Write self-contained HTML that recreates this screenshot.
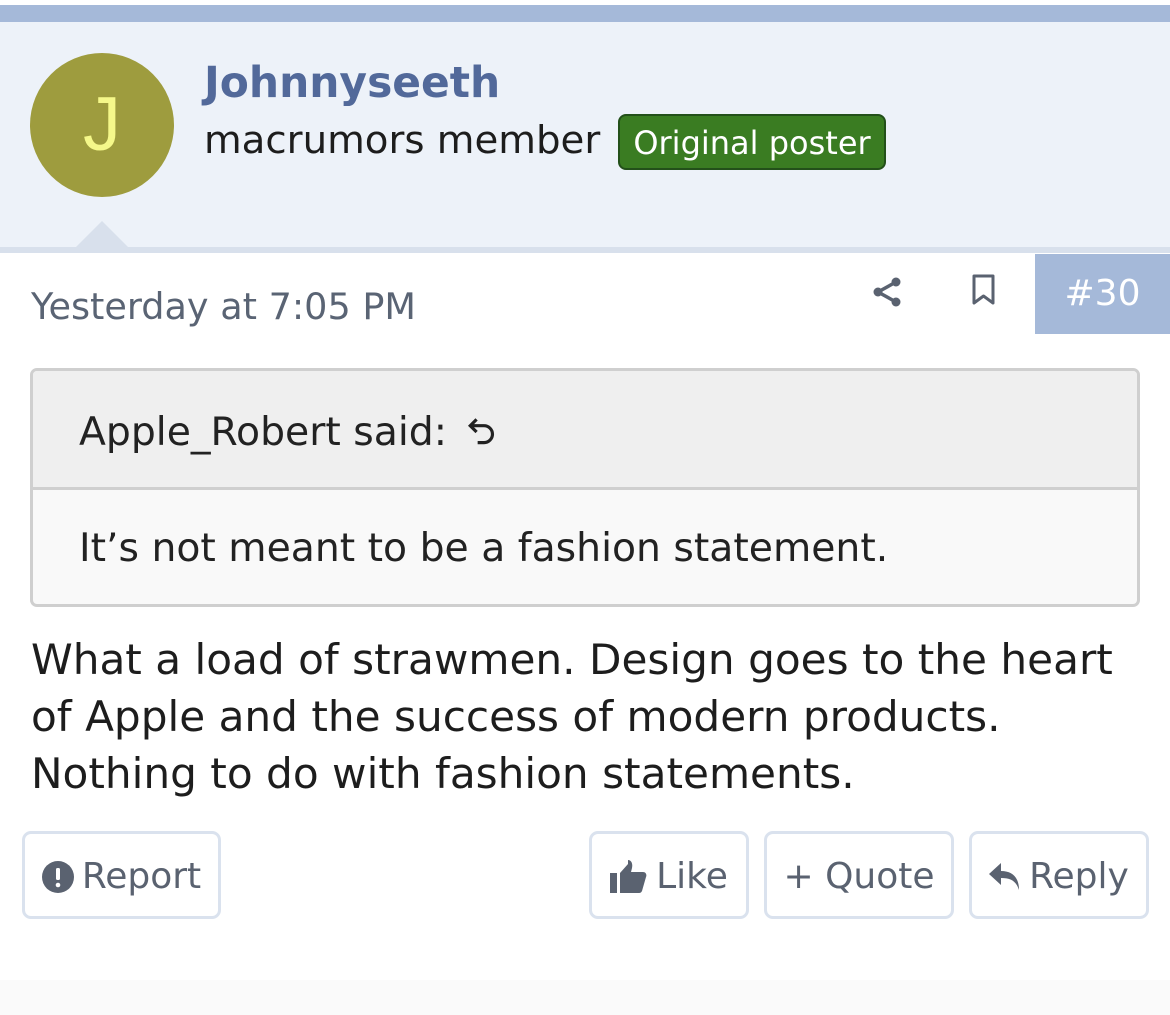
<!DOCTYPE html>
<html><head><meta charset="utf-8"><style>
*{margin:0;padding:0;box-sizing:border-box}
body{width:1170px;height:1015px;background:#fff;font-family:"DejaVu Sans","Liberation Sans",sans-serif;position:relative;overflow:hidden;color:#222}
.a{position:absolute;white-space:nowrap}
.btn{position:absolute;top:831px;height:88px;border:3px solid #dae2ee;border-radius:9px;color:#5a6270;font-size:36px;display:flex;align-items:center;justify-content:center;gap:8px;padding-top:3px}
</style></head><body>
<div class="a" style="top:5px;left:0;width:1170px;height:17px;background:#a5b9d9"></div>
<div class="a" style="top:22px;left:0;width:1170px;height:225px;background:#edf2f9"></div>
<div class="a" style="top:247px;left:0;width:1170px;height:6px;background:#d8e0ec"></div>
<div class="a" style="left:75px;top:221px;width:0;height:0;border-left:27px solid transparent;border-right:27px solid transparent;border-bottom:27px solid #d8e0ec"></div>
<div class="a" style="left:30px;top:53px;width:144px;height:144px;border-radius:50%;background:#9e9c3e;color:#f5f88a;font-family:'Liberation Sans',sans-serif;font-size:76px;text-align:center;line-height:144px">J</div>
<div class="a" style="left:204px;top:58px;font-size:42.4px;font-weight:bold;color:#52699a">Johnnyseeth</div>
<div class="a" style="left:204px;top:118px;font-size:38.7px;color:#1d1d1d">macrumors member</div>
<div class="a" style="left:618px;top:114px;width:268px;height:56px;background:#3a7c22;border:2px solid #23501a;border-radius:8px;color:#fff;font-size:32px;text-align:center;line-height:54px">Original poster</div>
<div class="a" style="left:31px;top:285px;font-size:36.6px;color:#5a6474">Yesterday at 7:05 PM</div>
<svg class="a" style="left:870px;top:274px" width="34" height="36" viewBox="0 0 34 36"><g fill="#5a6270"><circle cx="26" cy="8" r="4.5"/><circle cx="8" cy="18" r="4.5"/><circle cx="26" cy="28" r="4.5"/></g><path d="M26 8L8 18L26 28" stroke="#5a6270" stroke-width="3.5" fill="none"/></svg>
<svg class="a" style="left:971px;top:274px" width="26" height="32" viewBox="0 0 26 32"><path d="M3 2H22V29L12.5 22L3 29Z" fill="none" stroke="#5a6270" stroke-width="3" stroke-linejoin="round"/></svg>
<div class="a" style="left:1035px;top:254px;width:135px;height:80px;background:#a5b9d9;color:#fff;font-size:36px;text-align:center;line-height:80px">#30</div>
<div class="a" style="left:30px;top:368px;width:1110px;height:239px;border:3px solid #cfcfcf;border-radius:7px;background:#f9f9f9;overflow:hidden">
<div style="height:119px;background:#efefef;border-bottom:3px solid #cfcfcf;font-size:39.3px;padding:39px 0 0 46px;white-space:nowrap">Apple_Robert said: <svg width="34" height="36" viewBox="0 0 32 34" style="vertical-align:-4px;margin-left:8px"><path d="M9 6L3 12L9 18M3 12H16a8 8 0 0 1 0 16H10" fill="none" stroke="#222" stroke-width="3"/></svg></div>
<div style="font-size:39.3px;padding:36px 0 0 46px;white-space:nowrap">It’s not meant to be a fashion statement.</div>
</div>
<div class="a" style="left:31px;top:631px;font-size:42.2px;line-height:57px;color:#1d1d1d">What a load of strawmen. Design goes to the heart<br>of Apple and the success of modern products.<br>Nothing to do with fashion statements.</div>
<div class="btn" style="left:22px;width:199px"><svg width="32" height="32" viewBox="0 0 32 32"><circle cx="16" cy="16" r="16" fill="#5a6270"/><rect x="14" y="7" width="4" height="12" rx="1.5" fill="#fff"/><circle cx="16" cy="24" r="2.3" fill="#fff"/></svg>Report</div>
<div class="btn" style="left:589px;width:160px"><svg width="38" height="34" viewBox="0 0 38 34"><rect x="0" y="13" width="7" height="20" fill="#5a6270"/><path d="M10 13L18 4V0C21 0 23 3 22 8L21 12H33C36 12 37 15 36 17L32 31C31 33 30 33 28 33H10Z" fill="#5a6270"/></svg>Like</div>
<div class="btn" style="left:764px;width:190px">+ Quote</div>
<div class="btn" style="left:969px;width:180px"><svg width="32" height="28" viewBox="0 0 32 28"><path d="M12 0L0 11L12 22V15C22 15 27 18 30 27C30 15 24 8 12 8Z" fill="#5a6270"/></svg>Reply</div>
<div class="a" style="left:0;top:980px;width:1170px;height:35px;background:#fafafa"></div>
</body></html>
